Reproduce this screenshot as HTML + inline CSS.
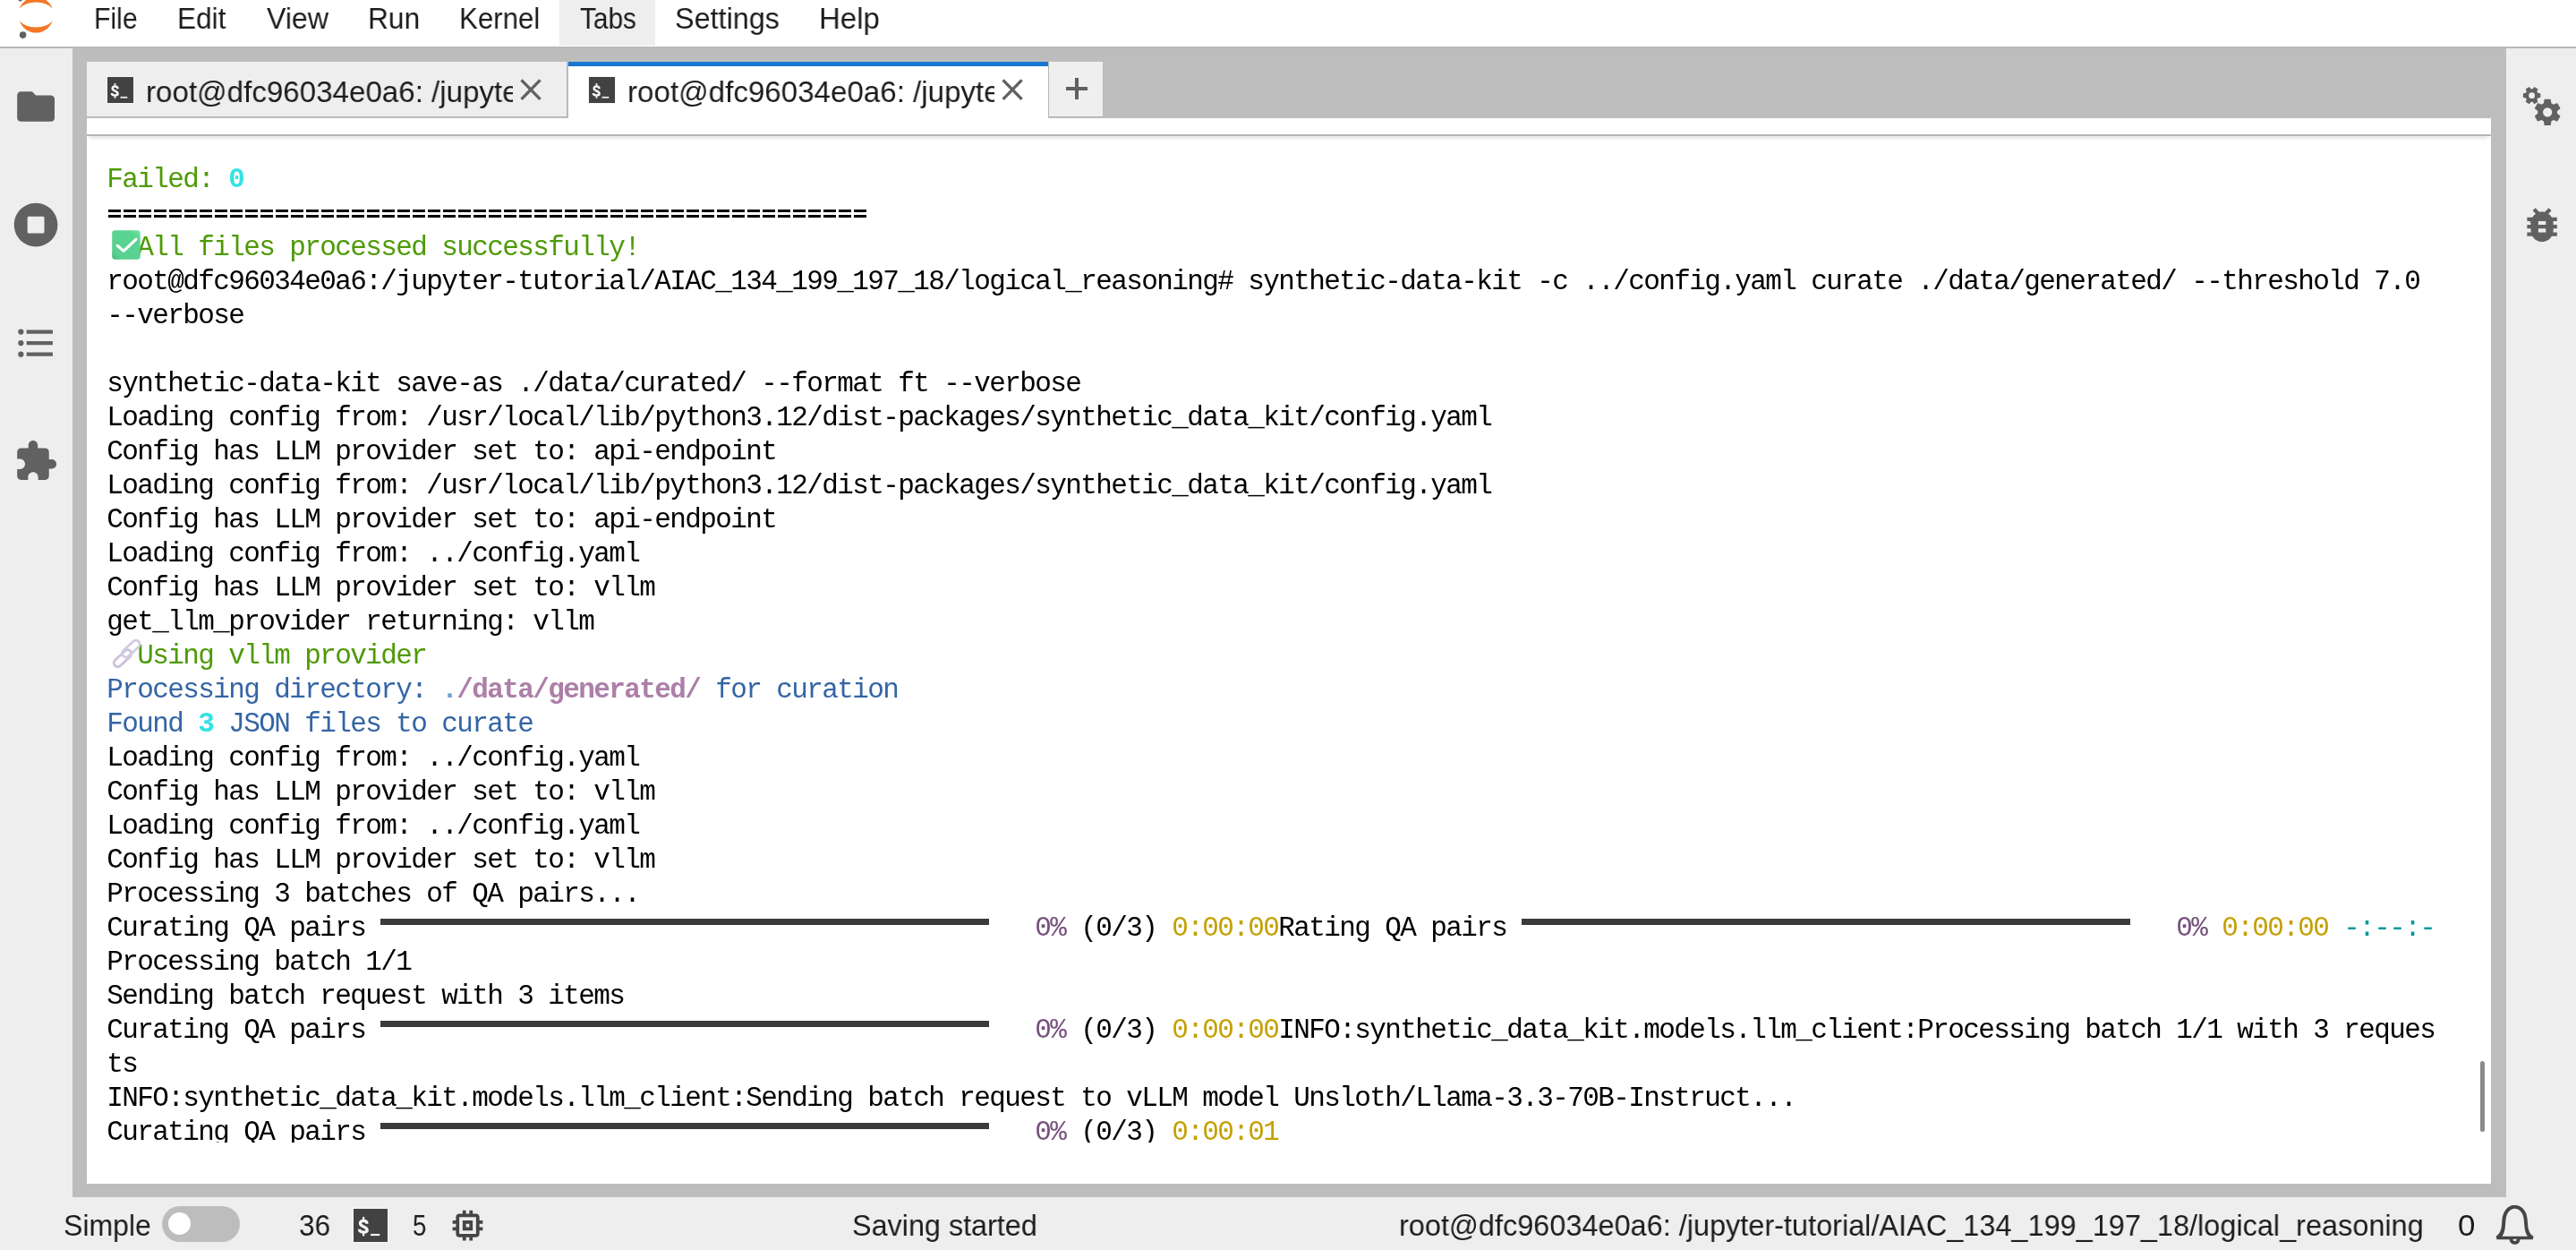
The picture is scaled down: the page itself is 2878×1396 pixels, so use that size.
<!DOCTYPE html>
<html><head><meta charset="utf-8"><title>JupyterLab</title>
<style>
html,body{margin:0;padding:0}
body{width:2878px;height:1396px;overflow:hidden;position:relative;background:#bdbdbd;font-family:"Liberation Sans", sans-serif}
.a{position:absolute}
.t{position:absolute;white-space:pre;transform-origin:0 0;font-family:"Liberation Sans", sans-serif;will-change:transform}
svg{position:absolute;overflow:visible}
#term{will-change:transform;position:absolute;left:120px;top:152px;width:2640px;height:1124px;overflow:hidden;font-family:"Liberation Mono", monospace;font-size:31px;letter-spacing:-1.603px;line-height:38px;color:#000;white-space:pre}
#term .l{position:absolute;left:0;height:38px;white-space:pre;text-indent:-0.8px}
#term .bar{position:absolute;height:7px;background:#3a3a3a}
.g{color:#4e9a06}.b{color:#3465a4}.m{color:#75507b}.y{color:#c4a000}.c{color:#06989a}
.bc{color:#34e2e2;font-weight:bold}.bb{color:#729fcf;font-weight:bold}.bm{color:#ad7fa8;font-weight:bold}
</style></head><body>

<div class="a" style="left:0;top:0;width:2878px;height:52px;background:#fff"></div>
<div class="a" style="left:625px;top:0;width:107px;height:50.5px;background:#eee"></div>
<div class="a" style="left:0;top:54px;width:81px;height:1283px;background:#eee"></div>
<div class="a" style="left:2799.9px;top:53.7px;width:78.1px;height:1284px;background:#eee"></div>
<div class="a" style="left:0;top:51.9px;width:2878px;height:1.9px;background:#b8b8b8"></div>
<div class="a" style="left:0;top:1336.7px;width:2878px;height:60px;background:#eee"></div>
<div class="a" style="left:97px;top:68.8px;width:536.2px;height:61.2px;background:#eee;border-right:1.9px solid #b7b7b7;border-bottom:1.9px solid #b7b7b7"></div>
<div class="a" style="left:635px;top:68.8px;width:536px;height:64px;background:#fff"></div>
<div class="a" style="left:635px;top:68.8px;width:536px;height:5.1px;background:#1976d2"></div>
<div class="a" style="left:1171px;top:68.8px;width:60.2px;height:61.2px;background:#efefef;border-left:1.9px solid #b7b7b7;border-bottom:1.9px solid #b7b7b7"></div>
<div class="a" style="left:97px;top:131.8px;width:2686px;height:1190.2px;background:#fff"></div>
<div class="a" style="left:97px;top:150px;width:2686px;height:16px;overflow:hidden"><div class="a" style="left:3px;right:3px;top:0;height:1.9px;box-shadow:0 1px 5px rgba(0,0,0,.3)"></div><div class="a" style="left:0;right:0;top:0;height:1.9px;background:#b7b7b7"></div></div>
<div class="a" style="left:2771px;top:1184.6px;width:5px;height:79.4px;background:#8b8b8b;border-radius:2.5px"></div>
<svg style="left:20.2px;top:-8.0px" width="39.5" height="51.65" viewBox="0 0 39 51">
<g fill="#F37726"><path transform="translate(1.74 30.98)" d="M18.2646 7.13411C10.4145 7.13411 3.55872 4.2576 0 0C1.32539 3.8204 3.79556 7.13081 7.0686 9.47303C10.3417 11.8152 14.2557 13.0734 18.269 13.0734C22.2823 13.0734 26.1963 11.8152 29.4694 9.47303C32.7424 7.13081 35.2126 3.8204 36.538 0C32.9705 4.2576 26.1148 7.13411 18.2646 7.13411Z"/>
<path transform="translate(1.73 4.48)" d="M18.2733 5.93931C26.1235 5.93931 32.9793 8.81583 36.538 13.0734C35.2126 9.25303 32.7424 5.94262 29.4694 3.6004C26.1963 1.25818 22.2823 0 18.269 0C14.2557 0 10.3417 1.25818 7.0686 3.6004C3.79556 5.94262 1.32539 9.25303 0 13.0734C3.56745 8.82463 10.4232 5.93931 18.2733 5.93931Z"/></g>
<g fill="#616161"><circle cx="34.25" cy="3.27" r="2.95"/><circle cx="5.51" cy="46.54" r="3.72"/><circle cx="2.54" cy="7.26" r="2.18"/></g></svg>
<svg style="left:14.8px;top:93.8px" width="50.2" height="50.2" viewBox="0 0 24 24"><path fill="#616161" d="M10 4H4c-1.1 0-1.99.9-1.99 2L2 18c0 1.1.9 2 2 2h16c1.1 0 2-.9 2-2V8c0-1.1-.9-2-2-2h-8l-2-2z"/></svg>
<svg style="left:14.8px;top:225.8px" width="50.2" height="50.2" viewBox="0 0 512 512"><path fill="#616161" d="M256 8C119 8 8 119 8 256s111 248 248 248 248-111 248-248S393 8 256 8zm96 328c0 8.800-7.200 16-16 16H176c-8.800 0-16-7.200-16-16V176c0-8.800 7.200-16 16-16h160c8.800 0 16 7.200 16 16v160z"/></svg>
<svg style="left:14.8px;top:357.9px" width="50.2" height="50.2" viewBox="0 0 24 24"><path fill="#616161" d="M7,5H21V7H7V5M7,13V11H21V13H7M4,4.5A1.5,1.5 0 0,1 5.5,6A1.5,1.5 0 0,1 4,7.5A1.5,1.5 0 0,1 2.500,6A1.5,1.5 0 0,1 4,4.5M4,10.500A1.5,1.5 0 0,1 5.5,12A1.5,1.5 0 0,1 4,13.500A1.5,1.5 0 0,1 2.500,12A1.5,1.5 0 0,1 4,10.500M7,19V17H21V19H7M4,16.500A1.5,1.5 0 0,1 5.5,18A1.5,1.5 0 0,1 4,19.500A1.5,1.5 0 0,1 2.500,18A1.5,1.5 0 0,1 4,16.500Z"/></svg>
<svg style="left:14.8px;top:489.9px" width="50.2" height="50.2" viewBox="0 0 24 24"><path fill="#616161" d="M20.5 11H19V7c0-1.100-.9-2-2-2h-4V3.500C13 2.120 11.880 1 10.500 1S8 2.120 8 3.500V5H4c-1.100 0-1.990.9-1.990 2v3.800H3.500c1.490 0 2.700 1.210 2.700 2.700s-1.210 2.700-2.700 2.700H2V20c0 1.100.9 2 2 2h3.800v-1.500c0-1.490 1.210-2.700 2.700-2.700 1.490 0 2.700 1.210 2.700 2.700V22H17c1.100 0 2-.9 2-2v-4h1.500c1.380 0 2.500-1.120 2.500-2.500S21.880 11 20.500 11z"/></svg>
<svg style="left:2814.9px;top:94.0px" width="50.2" height="50.2" viewBox="0 0 24 24"><g fill="#616161" fill-rule="evenodd"><path transform="translate(14.9 15) scale(.7) translate(-12 -12)" d="M12,15.5A3.5,3.5 0 0,1 8.5,12A3.5,3.5 0 0,1 12,8.5A3.5,3.5 0 0,1 15.5,12A3.5,3.5 0 0,1 12,15.5M19.43,12.97C19.47,12.65 19.5,12.33 19.5,12C19.5,11.67 19.47,11.34 19.43,11L21.54,9.37C21.73,9.22 21.78,8.95 21.66,8.73L19.66,5.27C19.54,5.05 19.27,4.96 19.05,5.05L16.56,6.05C16.04,5.66 15.5,5.32 14.87,5.07L14.5,2.42C14.46,2.18 14.25,2 14,2H10C9.75,2 9.54,2.18 9.5,2.42L9.13,5.07C8.5,5.32 7.96,5.66 7.44,6.05L4.95,5.05C4.73,4.96 4.46,5.05 4.34,5.27L2.34,8.73C2.21,8.95 2.27,9.22 2.46,9.37L4.57,11C4.53,11.34 4.5,11.67 4.5,12C4.5,12.33 4.53,12.65 4.57,12.97L2.46,14.63C2.27,14.78 2.21,15.05 2.34,15.27L4.34,18.73C4.46,18.95 4.73,19.03 4.95,18.95L7.44,17.94C7.96,18.34 8.5,18.68 9.13,18.93L9.5,21.58C9.54,21.82 9.75,22 10,22H14C14.25,22 14.46,21.82 14.5,21.58L14.87,18.93C15.5,18.67 16.04,18.34 16.56,17.94L19.05,18.95C19.27,19.03 19.54,18.95 19.66,18.73L21.66,15.27C21.78,15.05 21.73,14.78 21.54,14.63L19.43,12.97Z"/><path transform="translate(6.52 6.04) rotate(90) scale(.465) translate(-12 -12)" d="M12,15.5A3.5,3.5 0 0,1 8.5,12A3.5,3.5 0 0,1 12,8.5A3.5,3.5 0 0,1 15.5,12A3.5,3.5 0 0,1 12,15.5M19.43,12.97C19.47,12.65 19.5,12.33 19.5,12C19.5,11.67 19.47,11.34 19.43,11L21.54,9.37C21.73,9.22 21.78,8.95 21.66,8.73L19.66,5.27C19.54,5.05 19.27,4.96 19.05,5.05L16.56,6.05C16.04,5.66 15.5,5.32 14.87,5.07L14.5,2.42C14.46,2.18 14.25,2 14,2H10C9.75,2 9.54,2.18 9.5,2.42L9.13,5.07C8.5,5.32 7.96,5.66 7.44,6.05L4.95,5.05C4.73,4.96 4.46,5.05 4.34,5.27L2.34,8.73C2.21,8.95 2.27,9.22 2.46,9.37L4.57,11C4.53,11.34 4.5,11.67 4.5,12C4.5,12.33 4.53,12.65 4.57,12.97L2.46,14.63C2.27,14.78 2.21,15.05 2.34,15.27L4.34,18.73C4.46,18.95 4.73,19.03 4.95,18.95L7.44,17.94C7.96,18.34 8.5,18.68 9.13,18.93L9.5,21.58C9.54,21.82 9.75,22 10,22H14C14.25,22 14.46,21.82 14.5,21.58L14.87,18.93C15.5,18.67 16.04,18.34 16.56,17.94L19.05,18.95C19.27,19.03 19.54,18.95 19.66,18.73L21.66,15.27C21.78,15.05 21.73,14.78 21.54,14.63L19.43,12.97Z"/></g></svg>
<svg style="left:2814.9px;top:225.9px" width="50.2" height="50.2" viewBox="0 0 24 24"><path fill="#616161" d="M20 8h-2.810c-.45-.78-1.070-1.450-1.820-1.960L17 4.410 15.590 3l-2.170 2.170C12.960 5.060 12.490 5 12 5c-.49 0-.96.060-1.410.170L8.410 3 7 4.410l1.620 1.630C7.880 6.550 7.260 7.220 6.810 8H4v2h2.090c-.5.33-.9.66-.09 1v1H4v2h2v1c0 .34.040.67.090 1H4v2h2.810c1.040 1.790 2.970 3 5.190 3s4.150-1.210 5.190-3H20v-2h-2.090c.05-.33.09-.66.09-1v-1h2v-2h-2v-1c0-.34-.04-.67-.09-1H20V8zm-6 8h-4v-2h4v2zm0-4h-4v-2h4v2z"/></svg>
<svg style="left:120px;top:86px" width="29" height="29" viewBox="0 0 100 100" preserveAspectRatio="none"><rect x="-1.6" y="-1.6" width="103.2" height="103.2" fill="none" stroke="#f7f7f7" stroke-width="3.2"/><rect width="100" height="100" fill="#424242"/><path d="M39.6 45.5C39.6 39.5 35 36.2 29.2 36.2C23.5 36.2 19.6 39.5 19.6 44.2C19.6 50 24 51.6 29.5 53.8C35 56 40 58.5 40 64.7C40 68.7 35.5 70.5 29.2 70.5C22.5 70.5 17 68 17 61.8" fill="none" stroke="#f4f4f4" stroke-width="8.6"/><rect x="26.2" y="24.2" width="6" height="9" fill="#f4f4f4"/><rect x="26.2" y="73" width="6" height="9" fill="#f4f4f4"/><rect x="50" y="75.6" width="27" height="5.8" fill="#f4f4f4"/></svg>
<svg style="left:658px;top:86px" width="29" height="29" viewBox="0 0 100 100" preserveAspectRatio="none"><rect x="-1.6" y="-1.6" width="103.2" height="103.2" fill="none" stroke="#f7f7f7" stroke-width="3.2"/><rect width="100" height="100" fill="#424242"/><path d="M39.6 45.5C39.6 39.5 35 36.2 29.2 36.2C23.5 36.2 19.6 39.5 19.6 44.2C19.6 50 24 51.6 29.5 53.8C35 56 40 58.5 40 64.7C40 68.7 35.5 70.5 29.2 70.5C22.5 70.5 17 68 17 61.8" fill="none" stroke="#f4f4f4" stroke-width="8.6"/><rect x="26.2" y="24.2" width="6" height="9" fill="#f4f4f4"/><rect x="26.2" y="73" width="6" height="9" fill="#f4f4f4"/><rect x="50" y="75.6" width="27" height="5.8" fill="#f4f4f4"/></svg>
<svg style="left:395px;top:1350px" width="38" height="37" viewBox="0 0 100 100" preserveAspectRatio="none"><rect x="-1.6" y="-1.6" width="103.2" height="103.2" fill="none" stroke="#f7f7f7" stroke-width="3.2"/><rect width="100" height="100" fill="#424242"/><path d="M39.6 45.5C39.6 39.5 35 36.2 29.2 36.2C23.5 36.2 19.6 39.5 19.6 44.2C19.6 50 24 51.6 29.5 53.8C35 56 40 58.5 40 64.7C40 68.7 35.5 70.5 29.2 70.5C22.5 70.5 17 68 17 61.8" fill="none" stroke="#f4f4f4" stroke-width="8.6"/><rect x="26.2" y="24.2" width="6" height="9" fill="#f4f4f4"/><rect x="26.2" y="73" width="6" height="9" fill="#f4f4f4"/><rect x="50" y="75.6" width="27" height="5.8" fill="#f4f4f4"/></svg>
<svg style="left:0;top:0" width="1" height="1"><path d="M582.5 89.3L603.5 110.8M603.5 89.3L582.5 110.8" stroke="#616161" stroke-width="3.35" fill="none"/></svg>
<svg style="left:0;top:0" width="1" height="1"><path d="M1120.6000000000001 89.3L1141.6 110.8M1141.6 89.3L1120.6000000000001 110.8" stroke="#616161" stroke-width="3.35" fill="none"/></svg>
<div class="a" style="left:1191px;top:97.1px;width:24px;height:3.7px;background:#616161"></div>
<div class="a" style="left:1201.1px;top:87px;width:3.8px;height:24px;background:#616161"></div>
<div class="a" style="left:181px;top:1346.9px;width:87px;height:40px;border-radius:20px;background:#bdbdbd"></div>
<div class="a" style="left:187.8px;top:1353.8px;width:25.2px;height:25.2px;border-radius:50%;background:#fff"></div>
<svg style="left:500.1px;top:1346.2px" width="45" height="45" viewBox="0 0 24 24"><path fill="#454545" d="M15 9H9v6h6V9zm-2 4h-2v-2h2v2zm8-2V9h-2V7c0-1.100-.9-2-2-2h-2V3h-2v2h-2V3H9v2H7c-1.100 0-2 .9-2 2v2H3v2h2v2H3v2h2v2c0 1.100.9 2 2 2h2v2h2v-2h2v2h2v-2h2c1.100 0 2-.9 2-2v-2h2v-2h-2v-2h2zm-4 6H7V7h10v10z"/></svg>
<svg style="left:2787.2px;top:1345.2px" width="45.3" height="45.3" viewBox="0 0 16 16"><path fill="#454545" d="M8 0.290c-1.400 0-2.700 0.730-3.600 1.800-1.200 1.500-1.400 3.400-1.500 5.200-0.180 2.200-0.440 4-2.300 5.300l0.280 1.300h5c0.026 0.660 0.320 1.100 0.710 1.500 0.840 0.610 2 0.610 2.800 0 0.520-0.400 0.600-1 0.710-1.500h5l0.280-1.300c-1.900-0.970-2.200-3.300-2.300-5.300-0.130-1.800-0.260-3.700-1.500-5.200-0.850-1-2.200-1.800-3.600-1.800zm0 1.400c0.880 0 2 0.550 2.500 1.300 0.880 1.100 1.100 2.700 1.200 4.400 0.130 1.700 0.230 3.600 1.300 5.200h-10c1.100-1.600 1.200-3.400 1.300-5.200 0.130-1.700 0.300-3.300 1.200-4.400 0.590-0.720 1.600-1.300 2.500-1.300zm-0.740 12h1.500c-0.001 0.280 0.015 0.790-0.740 0.790-0.730 0.002-0.720-0.530-0.740-0.790z"/></svg>
<div class="t" style="left:105.23px;top:0.21px;font-size:34px;line-height:40px;color:#1c1c1c;transform:scaleX(0.8867);">File</div>
<div class="t" style="left:198.14px;top:0.21px;font-size:34px;line-height:40px;color:#1c1c1c;transform:scaleX(0.9275);">Edit</div>
<div class="t" style="left:297.50px;top:0.21px;font-size:34px;line-height:40px;color:#1c1c1c;transform:scaleX(0.9452);">View</div>
<div class="t" style="left:411.14px;top:0.21px;font-size:34px;line-height:40px;color:#1c1c1c;transform:scaleX(0.9322);">Run</div>
<div class="t" style="left:513.16px;top:0.21px;font-size:34px;line-height:40px;color:#1c1c1c;transform:scaleX(0.9184);">Kernel</div>
<div class="t" style="left:647.50px;top:0.21px;font-size:34px;line-height:40px;color:#1c1c1c;transform:scaleX(0.8755);">Tabs</div>
<div class="t" style="left:754.05px;top:0.21px;font-size:34px;line-height:40px;color:#1c1c1c;transform:scaleX(0.9516);">Settings</div>
<div class="t" style="left:915.06px;top:0.21px;font-size:34px;line-height:40px;color:#1c1c1c;transform:scaleX(0.9699);">Help</div>
<div class="t" style="left:70.56px;top:1347.91px;font-size:34px;line-height:40px;color:#1c1c1c;transform:scaleX(0.9410);">Simple</div>
<div class="t" style="left:333.82px;top:1347.91px;font-size:34px;line-height:40px;color:#1c1c1c;transform:scaleX(0.9259);">36</div>
<div class="t" style="left:460.69px;top:1347.91px;font-size:34px;line-height:40px;color:#1c1c1c;transform:scaleX(0.8118);">5</div>
<div class="t" style="left:952.05px;top:1347.91px;font-size:34px;line-height:40px;color:#1c1c1c;transform:scaleX(0.9513);">Saving started</div>
<div class="t" style="left:1563.09px;top:1347.91px;font-size:34px;line-height:40px;color:#1c1c1c;transform:scaleX(0.9548);">root@dfc96034e0a6: /jupyter-tutorial/AIAC_134_199_197_18/logical_reasoning</div>
<div class="t" style="left:2745.97px;top:1347.91px;font-size:34px;line-height:40px;color:#1c1c1c;transform:scaleX(1.0294);">0</div>
<div class="a" style="left:162.80px;top:81.96px;width:410.40px;height:40px;overflow:hidden"><div class="t" style="left:0;top:0;font-size:34px;line-height:40px;color:#1c1c1c;transform:scaleX(0.9741)">root@dfc96034e0a6: /jupyter-tutorial/AIAC</div></div>
<div class="a" style="left:700.85px;top:81.96px;width:410.35px;height:40px;overflow:hidden"><div class="t" style="left:0;top:0;font-size:34px;line-height:40px;color:#1c1c1c;transform:scaleX(0.9741)">root@dfc96034e0a6: /jupyter-tutorial/AIAC</div></div>
<div id="term">
<div class="l" style="top:29.50px"><span class="g">Failed: </span><span class="bc">0</span></div>
<div class="l" style="top:67.50px">                                                  <span class="bar" style="left:1px;top:14.5px;width:847px;height:3px;background:repeating-linear-gradient(90deg,#000 0,#000 14px,transparent 14px,transparent 17px)"></span><span class="bar" style="left:1px;top:20.5px;width:847px;height:3px;background:repeating-linear-gradient(90deg,#000 0,#000 14px,transparent 14px,transparent 17px)"></span></div>
<div class="l" style="top:105.50px">  <span class="g">All files processed successfully!</span><svg style="left:5.3px;top:-0.6px" width="31.9" height="32.85" viewBox="0 0 31.9 32.85"><defs><linearGradient id="gk" x1="0" y1="1" x2="1" y2="0"><stop offset="0" stop-color="#45b583"/><stop offset=".18" stop-color="#58d08f"/><stop offset=".8" stop-color="#5bd492"/><stop offset="1" stop-color="#70eaa5"/></linearGradient></defs><rect x=".2" y=".2" width="31.5" height="32.45" rx="3.4" fill="url(#gk)"/><path d="M6.2 17.4L13.1 23.3L26.9 10.3" fill="none" stroke="#fff" stroke-width="3.2" stroke-linecap="round" stroke-linejoin="round"/></svg></div>
<div class="l" style="top:143.50px">root@dfc96034e0a6:/jupyter-tutorial/AIAC_134_199_197_18/logical_reasoning# synthetic-data-kit -c ../config.yaml curate ./data/generated/ --threshold 7.0</div>
<div class="l" style="top:181.50px">--verbose</div>
<div class="l" style="top:219.50px"></div>
<div class="l" style="top:257.50px">synthetic-data-kit save-as ./data/curated/ --format ft --verbose</div>
<div class="l" style="top:295.50px">Loading config from: /usr/local/lib/python3.12/dist-packages/synthetic_data_kit/config.yaml</div>
<div class="l" style="top:333.50px">Config has LLM provider set to: api-endpoint</div>
<div class="l" style="top:371.50px">Loading config from: /usr/local/lib/python3.12/dist-packages/synthetic_data_kit/config.yaml</div>
<div class="l" style="top:409.50px">Config has LLM provider set to: api-endpoint</div>
<div class="l" style="top:447.50px">Loading config from: ../config.yaml</div>
<div class="l" style="top:485.50px">Config has LLM provider set to: vllm</div>
<div class="l" style="top:523.50px">get_llm_provider returning: vllm</div>
<div class="l" style="top:561.50px">  <span class="g">Using vllm provider</span><svg style="left:0;top:0" width="40" height="38"><g fill="none" stroke-width="2.9"><rect x="-11.8" y="-4.25" width="23.6" height="8.5" rx="4.25" transform="translate(17 21.2) rotate(-43)" stroke="#cbc1dd"/><rect x="-11.8" y="-4.25" width="23.6" height="8.5" rx="4.25" transform="translate(26.3 10.5) rotate(-43)" stroke="#d3cae3"/></g></svg></div>
<div class="l" style="top:599.50px"><span class="b">Processing directory: </span><span class="bb">.</span><span class="bm">/data/generated/</span><span class="b"> for curation</span></div>
<div class="l" style="top:637.50px"><span class="b">Found </span><span class="bc">3</span><span class="b"> JSON files to curate</span></div>
<div class="l" style="top:675.50px">Loading config from: ../config.yaml</div>
<div class="l" style="top:713.50px">Config has LLM provider set to: vllm</div>
<div class="l" style="top:751.50px">Loading config from: ../config.yaml</div>
<div class="l" style="top:789.50px">Config has LLM provider set to: vllm</div>
<div class="l" style="top:827.50px">Processing 3 batches of QA pairs...</div>
<div class="l" style="top:865.50px">Curating QA pairs                                          <span class="m">  0%</span> (0/3) <span class="y">0:00:00</span>Rating QA pairs                                          <span class="m">  0%</span> <span class="y">0:00:00</span> <span class="c">-:--:-</span><span class="bar" style="left:305.2px;top:8.3px;width:680px"></span><span class="bar" style="left:1580.2px;top:8.3px;width:680px"></span></div>
<div class="l" style="top:903.50px">Processing batch 1/1</div>
<div class="l" style="top:941.50px">Sending batch request with 3 items</div>
<div class="l" style="top:979.50px">Curating QA pairs                                          <span class="m">  0%</span> (0/3) <span class="y">0:00:00</span>INFO:synthetic_data_kit.models.llm_client:Processing batch 1/1 with 3 reques<span class="bar" style="left:305.2px;top:8.3px;width:680px"></span></div>
<div class="l" style="top:1017.50px">ts</div>
<div class="l" style="top:1055.50px">INFO:synthetic_data_kit.models.llm_client:Sending batch request to vLLM model Unsloth/Llama-3.3-70B-Instruct...</div>
<div class="l" style="top:1093.50px">Curating QA pairs                                          <span class="m">  0%</span> (0/3) <span class="y">0:00:01</span><span class="bar" style="left:305.2px;top:8.3px;width:680px"></span></div>
</div>
</body></html>
